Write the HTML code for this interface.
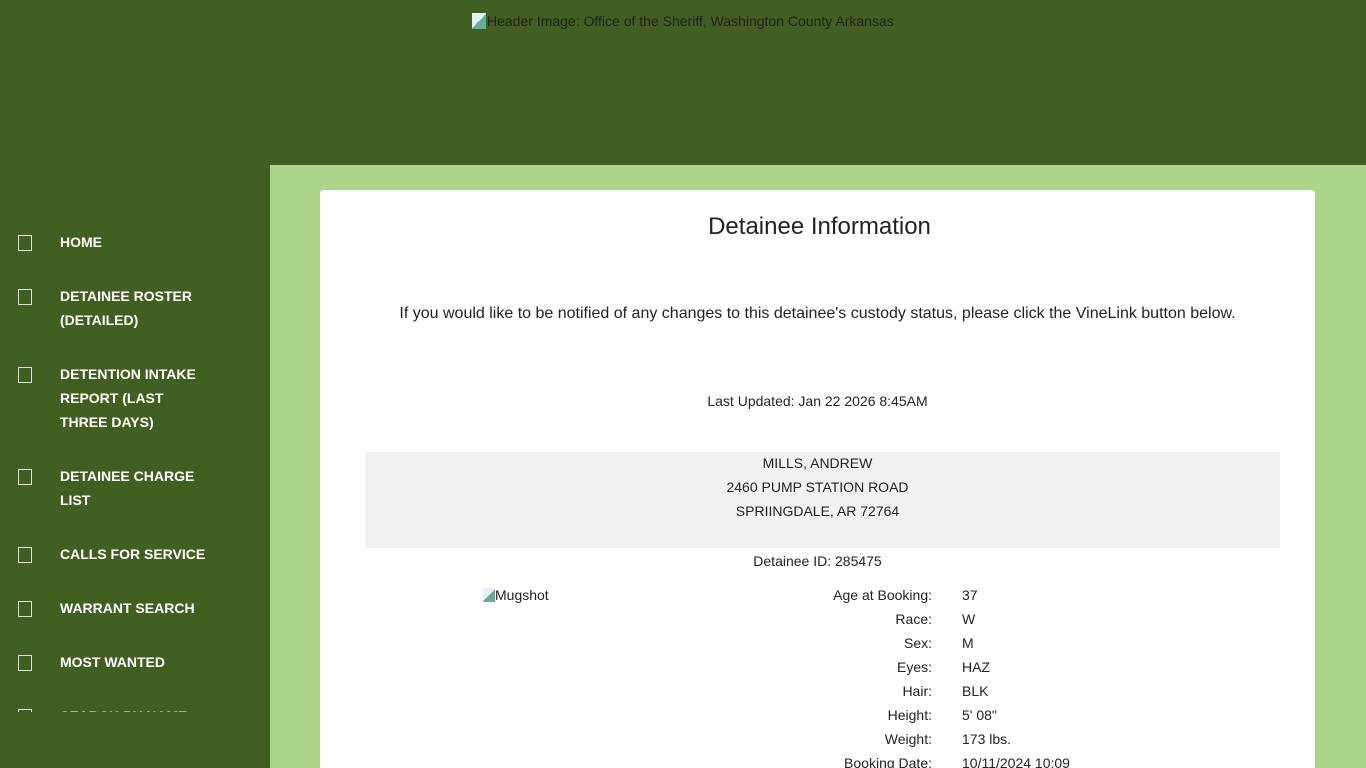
<!DOCTYPE html>
<html style="overflow:hidden"><head><meta charset="utf-8"><style>
html,body{overflow:hidden;height:768px}
body{margin:0;width:1366px;height:768px;overflow:hidden;background:#415f21;font-family:"Liberation Sans",Arial,sans-serif;position:relative}
.hdr{position:absolute;left:472px;top:13px;font-size:14px;color:#222;}
.hdr i{display:inline-block;width:14px;height:16px;background:linear-gradient(135deg,#e8eef8 50%,#6a9 50%);vertical-align:-3px;margin-right:1px}
.main{position:absolute;left:270px;top:165px;width:1096px;height:603px;background:#acd48a}
.card{position:absolute;left:320px;top:190px;width:995px;height:578px;overflow:hidden;background:#fff;border-radius:4px 4px 0 0;color:#222}
.nav{position:absolute;left:0;top:230px;width:270px;height:482px;overflow:hidden}
.it{position:absolute;left:60px;color:#fff;font-weight:bold;font-size:14px;line-height:24px;width:147px}
.it:before{content:"";position:absolute;left:-42px;top:5px;width:12px;height:14px;border:1px solid #dde;}
.c{position:absolute;left:0;width:995px;text-align:center}
.l{position:absolute;right:383px;text-align:right;font-size:14px}
.v{position:absolute;left:642px;font-size:14px}
</style></head><body>
<div class="hdr"><i></i>Header Image: Office of the Sheriff, Washington County Arkansas</div>
<div class="main"></div>
<div class="nav">
<div class="it" style="top:0">HOME</div>
<div class="it" style="top:54px">DETAINEE ROSTER (DETAILED)</div>
<div class="it" style="top:132px">DETENTION INTAKE REPORT (LAST THREE DAYS)</div>
<div class="it" style="top:234px">DETAINEE CHARGE LIST</div>
<div class="it" style="top:312px;width:170px">CALLS FOR SERVICE</div>
<div class="it" style="top:366px">WARRANT SEARCH</div>
<div class="it" style="top:420px">MOST WANTED</div>
<div class="it" style="top:474px">SEARCH BY NAME</div>
</div>
<div class="card">
<div class="c" style="top:23px;font-size:24px;line-height:28px;left:2px">Detainee Information</div>
<div class="c" style="top:115px;font-size:16px;line-height:18px">If you would like to be notified of any changes to this detainee's custody status, please click the VineLink button below.</div>
<div class="c" style="top:203px;font-size:14px;line-height:16px">Last Updated: Jan 22 2026 8:45AM</div>
<div style="position:absolute;left:45px;top:262px;width:915px;height:96px;background:#f1f1f1"></div>
<div class="c" style="top:261px;font-size:14px;line-height:24px">MILLS, ANDREW<br>2460 PUMP STATION ROAD<br>SPRIINGDALE, AR 72764</div>
<div class="c" style="top:359px;font-size:14px;line-height:24px">Detainee ID: 285475</div>
<div style="position:absolute;left:163px;top:397px;font-size:14px"><span style="display:inline-block;width:12px;height:14px;background:linear-gradient(135deg,#e8eef8 50%,#6a9 50%);vertical-align:-2px"></span>Mugshot</div>
<div style="position:absolute;top:393px;left:0;width:995px;line-height:24px">
<div class="l" style="top:0">Age at Booking:</div><div class="v" style="top:0">37</div>
<div class="l" style="top:24px">Race:</div><div class="v" style="top:24px">W</div>
<div class="l" style="top:48px">Sex:</div><div class="v" style="top:48px">M</div>
<div class="l" style="top:72px">Eyes:</div><div class="v" style="top:72px">HAZ</div>
<div class="l" style="top:96px">Hair:</div><div class="v" style="top:96px">BLK</div>
<div class="l" style="top:120px">Height:</div><div class="v" style="top:120px">5' 08"</div>
<div class="l" style="top:144px">Weight:</div><div class="v" style="top:144px">173 lbs.</div>
<div class="l" style="top:168px">Booking Date:</div><div class="v" style="top:168px">10/11/2024 10:09</div>
</div>
</div>
</body></html>
